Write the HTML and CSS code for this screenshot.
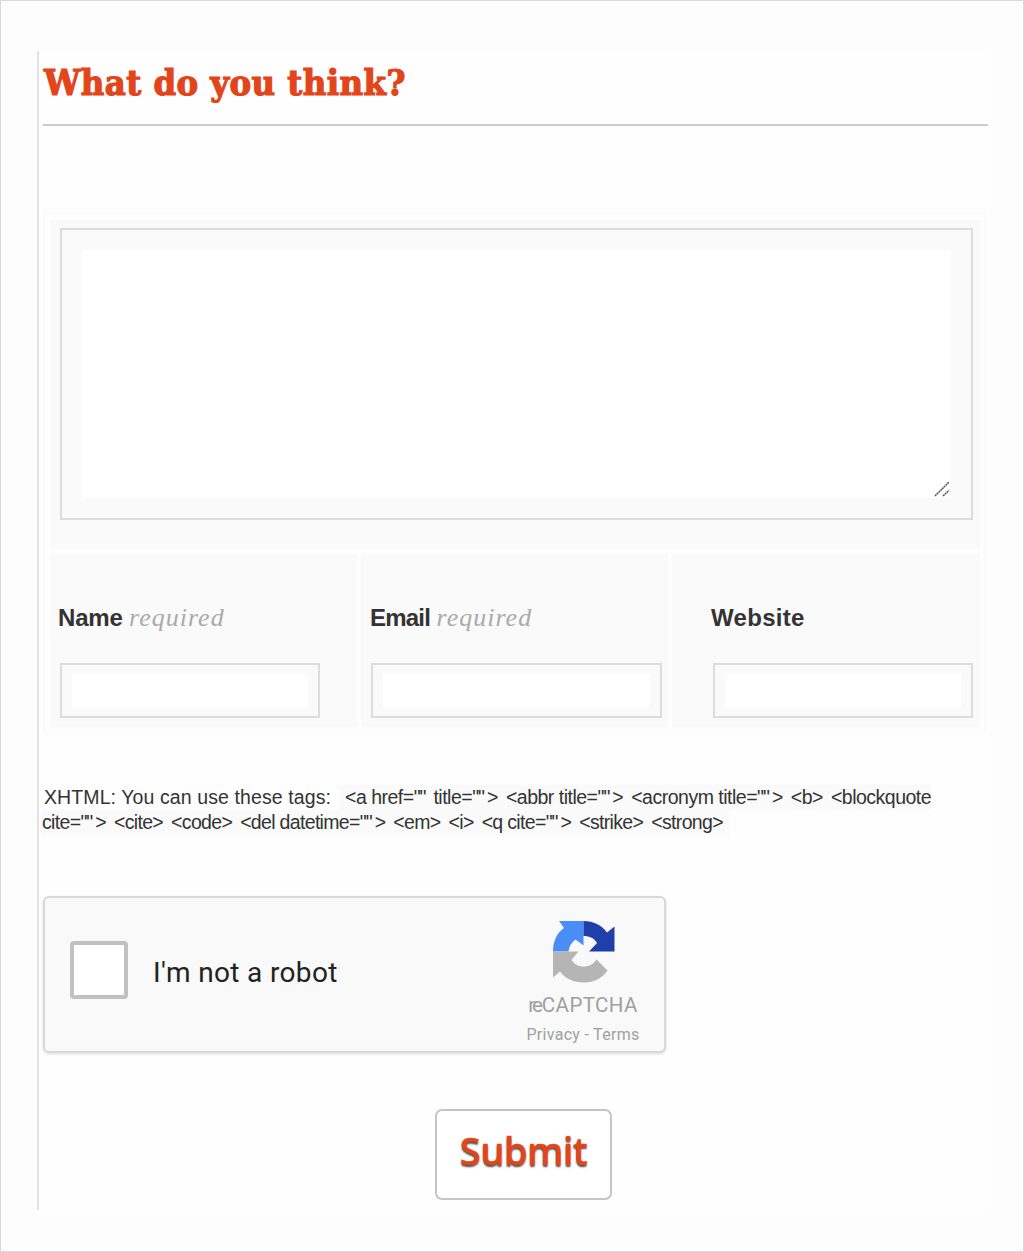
FILE: index.html
```html
<!DOCTYPE html>
<html lang="en">
<head>
<meta charset="utf-8">
<title>What do you think?</title>
<link rel="stylesheet" href="styles.css">
</head>
<body>
<main class="panel">
  <h1 class="title">What do you think?</h1>
  <form class="form">
    <div class="fields">
      <div class="cell comment"><div class="box area"><div class="inner"></div>
        <svg class="grip" width="16" height="16" viewBox="0 0 16 16"><path d="M1 15 15 1M9 15l6-5.500" fill="none" stroke="#555" stroke-width="1.500" stroke-dasharray="2 .5"/></svg></div></div>
      <div class="cell"><label class="label name"><b>Name</b> <i>required</i></label><div class="box"><div class="inner"></div></div></div>
      <div class="cell email"><label class="label"><b>Email</b> <i>required</i></label><div class="box"><div class="inner"></div></div></div>
      <div class="cell website"><label class="label"><b>Website</b></label><div class="box"><div class="inner"></div></div></div>
    </div>
    <div class="tags">
      <div class="line"><span class="intro">XHTML: You can use these tags:</span><code class="code"><span>&lt;a href=<q>""</q> title=<q>""</q>&gt;</span> <span>&lt;abbr title=<q>""</q>&gt;</span> <span>&lt;acronym title=<q>""</q>&gt;</span> <span>&lt;b&gt;</span> <span>&lt;blockquote</span></code></div>
      <div class="line"><code class="code second"><span>cite=<q>""</q>&gt;</span> <span>&lt;cite&gt;</span> <span>&lt;code&gt;</span> <span>&lt;del datetime=<q>""</q>&gt;</span> <span>&lt;em&gt;</span> <span>&lt;i&gt;</span> <span>&lt;q cite=<q>""</q>&gt;</span> <span>&lt;strike&gt;</span> <span>&lt;strong&gt;</span></code></div>
    </div>
    <div class="captcha">
      <span class="check"></span>
      <span class="robot">I'm not a robot</span>
      <div class="brand">
        <svg class="logo" width="62" height="63" viewBox="0 0 62 63">
          <path fill="#4a8df6" d="M30.500 1H6l5 7C4 13 0 21 0 31.500h15.500c.5-5 3-9 7-12l8 6Z"/>
          <path fill="#213fab" d="M30.500 1c10 0 18 4 23.500 11.500L61.500 6.500v25H36l8-8.500c-3-5-7-7-13.500-7Z"/>
          <path fill="#b5b5b5" d="M0 31.500h25.500l-7 8.500c3 4.500 7 6.500 12 6.500 6 0 10-2.500 13-7L54.500 50.500C49 58.500 41 62.500 31 62.500S12.500 59 7 51.500l-7 6Z"/>
        </svg>
        <span class="rc"><span class="re">re</span>CAPTCHA</span>
        <span class="legal">Privacy - Terms</span>
      </div>
    </div>
    <button class="submit" type="button">Submit</button>
  </form>
</main>
</body>
</html>
```
FILE: styles.css
```css
* { box-sizing: border-box; }
body {
  margin: 0;
  height: 1252px;
  padding: 50px 35px 0 36px;
  border: 1px solid #d9d9d9;
  background: #fdfdfd;
  color: #333;
  font-family: "Liberation Sans", sans-serif;
}
.panel {
  height: 1159px;
  padding-left: 4px;
  border-left: 2px solid #e1e1e4;
  background: #fefefe;
}
.title {
  height: 75px;
  margin: 0;
  padding: 9px 0 0 1px;
  border-bottom: 2px solid #ccc;
  color: #e2451a;
  font: bold 36px/44px "DejaVu Serif Condensed", "DejaVu Serif", serif;
  font-stretch: condensed;
  letter-spacing: .45px;
  -webkit-text-stroke: 1.2px #e2451a;
  white-space: nowrap;
}
.form { display: flex; flex-direction: column; padding-top: 87px; }
.fields {
  display: grid;
  grid-template: 329px 173px / 307px 307px 308px;
  gap: 5px 4px;
  width: 943px;
  height: 519px;
  padding: 5px;
  border: 2px solid #fbfbfb;
}
.cell { background: #fafafa; padding: 50px 0 0 10px; }
.comment { grid-column: 1 / 4; padding-top: 8px; }
.website { padding-left: 41px; }
.box { width: 260px; height: 55px; padding: 9px 10px; border: 2px solid #ddd; }
.email .box { width: 291px; }
.inner { height: 33px; background: #fff; }
.area { display: grid; width: 913px; height: 292px; padding: 20px; }
.area > * { grid-area: 1 / 1; }
.area .inner { height: 248px; }
.grip { place-self: end; margin: 0 1px 1px 0; }
.label {
  display: block;
  height: 59px;
  margin-left: -2px;
  font-size: 24px;
  line-height: 28px;
  letter-spacing: -.2px;
  white-space: nowrap;
}
.email .label { margin-left: -1px; }
.email .label b { letter-spacing: -.8px; }
.website .label { letter-spacing: .3px; }
.label i { color: #aaa; font-family: "Liberation Serif", serif; font-size: 26px; letter-spacing: 1px; }
.tags { height: 111px; margin-top: 53px; margin-left: -1px; font-size: 19.5px; line-height: 25px; white-space: nowrap; }
.line { display: flex; height: 25px; }
.intro { width: 297px; padding-left: 2px; letter-spacing: .1px; }
.code { display: flex; gap: 8px; padding: 0 0 0 6px; background: #fafafa; font-family: inherit; letter-spacing: -.5px; }
.second { padding: 0 6px 0 0; letter-spacing: -.67px; }
.code q { letter-spacing: -1px; margin-right: 3px; quotes: none; }
.captcha {
  display: flex;
  width: 623px;
  height: 157px;
  padding: 0 25px;
  align-items: center;
  border: 2px solid #d8d8d8;
  border-radius: 6px;
  background: #f9f9f9;
  box-shadow: 0 1px 3px #ddd;
}
.check { width: 58px; height: 58px; margin-top: -10px; border: 4px solid #c1c1c1; border-radius: 4px; background: #fff; }
.robot { margin: -3px 0 0 25px; color: #222; font: 28px/36px Roboto, sans-serif; letter-spacing: .35px; white-space: nowrap; }
.brand { display: flex; flex-direction: column; align-items: center; width: 114px; height: 153px; margin: 0 -1px 0 auto; padding-top: 22px; color: #a0a0a0; font-family: Roboto, sans-serif; }
.logo { margin-left: 2px; }
.rc { margin-top: 8px; font-size: 20.5px; line-height: 28px; letter-spacing: .4px; white-space: nowrap; }
.re { letter-spacing: -3px; margin-right: 2px; }
.legal { margin-top: 2px; font-size: 16px; line-height: 28px; letter-spacing: .3px; white-space: nowrap; }
.submit {
  width: 177px;
  height: 91px;
  margin: 56px 0 0 392px;
  padding: 0 0 9px;
  border: 2px solid #c5c5c5;
  border-radius: 7px;
  background: #fff;
  color: #e2451a;
  font: 500 38px/50px "Noto Sans", sans-serif;
  letter-spacing: -.3px;
  -webkit-text-stroke: .6px #e2451a;
  text-shadow: 0 2px 2px #444;
}
```
